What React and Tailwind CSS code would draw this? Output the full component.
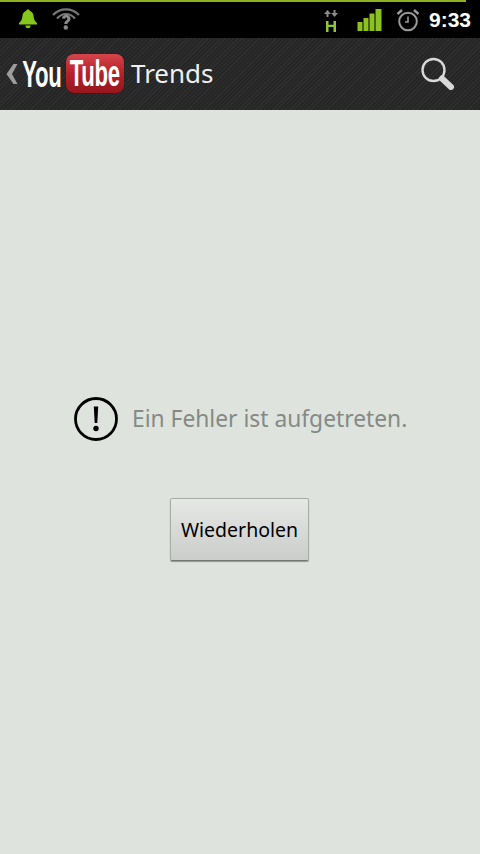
export default function App() {
  return (
    <div className="w-[480px] h-[854px] flex flex-col overflow-hidden bg-[#dee3de] font-['Noto_Sans','Open_Sans',sans-serif]">
      {/* Status bar */}
      <div className="h-[38px] bg-black flex flex-col shrink-0">
        <div className="h-[2px] w-[466px] bg-[#8fb021]" />
        <div className="flex-1 flex items-center pl-[18px] pr-[9px]">
          <svg width="20" height="22" viewBox="0 0 20 20" className="mr-[14px] mt-[-2px]">
            <path d="M10 0.500c1.200 0 1.800.7 1.900 1.500 2.500.8 3.500 2.800 3.700 5.200.2 3 1 4.800 3.400 6.800v1.600H1V14c2.400-2 3.200-3.800 3.400-6.800C4.600 4.800 5.600 2.800 8.100 2c.1-.8.7-1.500 1.900-1.500z" fill="#85c71a" />
            <path d="M7.400 16.600h5.200a2.600 2.600 0 0 1-5.200 0z" fill="#85c71a" />
          </svg>
          <svg width="28" height="24" viewBox="0 0 28 24" className="mt-[-2px]">
            <path d="M1 8C8.500 .5 19.500 .5 27 8" fill="none" stroke="#777" strokeWidth="2.200" />
            <path d="M5 11.500C10.500 5.500 17.500 5.500 23 11.500" fill="none" stroke="#777" strokeWidth="2.200" />
            <path d="M10 11.500c0-5 8.500-5 8.500 .2 0 3-3 3-3 5.300h-3.200c0-3.200 3-3.500 3-5.300 0-1.500-2-1.500-2 0z" fill="#8a8a8a" />
            <circle cx="13.800" cy="20.500" r="2.200" fill="#8a8a8a" />
          </svg>
          <div className="flex-1" />
          <svg width="16" height="24" viewBox="0 0 16 24" className="mr-[18px]">
            <path d="M4.500 2 1 6h2.500v3h2V6H8zM11.500 9 15 5h-2.500V2h-2v3H8z" fill="#8d8d8d" />
            <path d="M3 13h2.500v3.800h5V13H13v11h-2.500v-5h-5v5H3z" fill="#8cc63f" />
          </svg>
          <svg width="26" height="24" viewBox="0 0 26 24" className="mr-[13px]">
            <rect x="0.500" y="14" width="5" height="9" fill="#8cc21f" />
            <rect x="6.500" y="10" width="5" height="13" fill="#8cc21f" />
            <rect x="12.500" y="5.500" width="5" height="17.500" fill="#8cc21f" />
            <rect x="18.500" y="1" width="6" height="22" fill="#8cc21f" />
          </svg>
          <svg width="24" height="24" viewBox="0 0 24 24" className="mr-[9px]" fill="none" stroke="#9a9a9a">
            <circle cx="12" cy="13.500" r="8.800" strokeWidth="2" />
            <path d="M12 8.500v5.500h-3" strokeWidth="1.600" />
            <path d="M1.500 6 6 2M22.500 6 18 2" strokeWidth="2.400" />
          </svg>
          <span className="text-white text-[21px] font-bold leading-none mt-[-1px] font-['Liberation_Sans',sans-serif]">9:33</span>
        </div>
      </div>

      {/* Action bar */}
      <div className="h-[72px] shrink-0 flex items-center pl-[6px] pr-[24px] bg-[#2a2a2a] bg-[repeating-linear-gradient(135deg,#2f2f2f_0px,#2f2f2f_1px,#262626_1px,#262626_3px)]">
        <svg width="12" height="22" viewBox="0 0 12 22" className="shrink-0">
          <path d="M7.500 1 0.500 11l7 10h4L6 11l5.500-10z" fill="#9c9c9c" />
        </svg>
        <span className="w-[38px] ml-[5px] h-[40px] flex items-center justify-center shrink-0 overflow-visible">
          <span className="text-white text-[37px] font-bold leading-none scale-x-[0.6] tracking-[-0.5px] font-['Liberation_Sans',sans-serif]">You</span>
        </span>
        <span className="w-[58px] h-[39px] ml-[5px] rounded-[8px] bg-[linear-gradient(#d5454a,#b5212a_50%,#96161d)] flex items-center justify-center shrink-0 shadow-[0_0_1px_#000] mt-[-1px]">
          <span className="text-white text-[37px] font-bold leading-none scale-x-[0.6] tracking-[-0.5px] font-['Liberation_Sans',sans-serif]">Tube</span>
        </span>
        <span className="ml-[7px] text-[#f0f0f0] text-[26px] leading-none mt-[-2px]">Trends</span>
        <div className="flex-1" />
        <svg width="36" height="34" viewBox="0 0 36 34" className="mt-[-2px] mr-[1px]">
          <circle cx="14.500" cy="14" r="11" fill="none" stroke="#d8d8d8" strokeWidth="2.400" />
          <path d="M23 22.500 32 31" stroke="#d8d8d8" strokeWidth="6" strokeLinecap="round" />
        </svg>
      </div>

      {/* Content */}
      <div className="flex-1 pt-[287px] pl-[74px]">
        <div className="flex items-center h-[44px]">
          <svg width="44" height="44" viewBox="0 0 44 44" className="shrink-0">
            <circle cx="22" cy="22" r="20.500" fill="none" stroke="#000" strokeWidth="2.800" />
            <path d="M19.800 9.500h4.400l-.9 16.500h-2.600z" fill="#000" />
            <circle cx="22" cy="31.500" r="2.700" fill="#000" />
          </svg>
          <span className="ml-[14px] mt-[1px] text-[22.800px] leading-none text-[#858a86] whitespace-nowrap">Ein Fehler ist aufgetreten.</span>
        </div>
        <button className="ml-[96px] mt-[57px] w-[139px] h-[63px] pt-[1px] rounded-[2px] border border-[#a9aba9] border-b-[#777] bg-[linear-gradient(#e6e8e6,#cbcdca)] shadow-[0_1px_1px_rgba(0,0,0,0.35)] text-black text-[19.500px] leading-none block">
          Wiederholen
        </button>
      </div>
    </div>
  );
}
